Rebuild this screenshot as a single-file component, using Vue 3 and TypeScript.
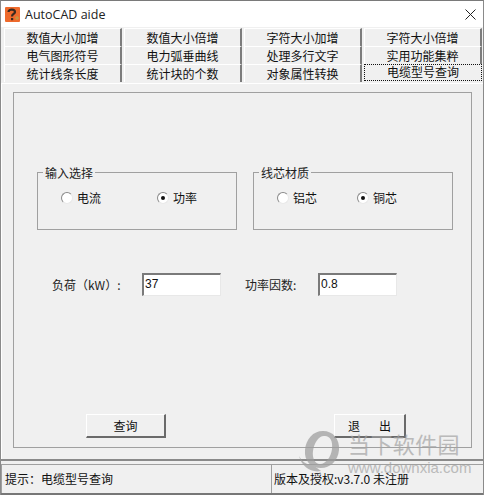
<script setup lang="ts">
import { ref } from 'vue'

const tabs = [
  '数值大小加增', '数值大小倍增', '字符大小加增', '字符大小倍增',
  '电气图形符号', '电力弧垂曲线', '处理多行文字', '实用功能集粹',
  '统计线条长度', '统计块的个数', '对象属性转换', '电缆型号查询'
]
const activeTab = ref('电缆型号查询')
const inputMode = ref('power')
const material = ref('copper')
const load = ref('37')
const factor = ref('0.8')
</script>

<template>
  <div class="window">
    <div class="titlebar">
      <svg class="app-icon" width="15" height="15" viewBox="0 0 15 15">
        <rect x="0" y="0" width="15" height="15" rx="1" fill="#ee6a2c" />
        <path d="M3.5 5 C3.5 1.8 10 1.8 10 5 C10 7 7 7 7 9.5" fill="none" stroke="#3a2a20" stroke-width="2.2" />
        <rect x="6" y="11" width="2.2" height="2.2" fill="#3a2a20" />
        <path d="M10 11 L14 11 M12 9 L12 13" stroke="#b9a24a" stroke-width="1" />
      </svg>
      <span class="title">AutoCAD aide</span>
      <svg class="close" width="11" height="11" viewBox="0 0 11 11">
        <path d="M0.5 0.5 L10.5 10.5 M10.5 0.5 L0.5 10.5" stroke="#222" stroke-width="1" fill="none" />
      </svg>
    </div>

    <div class="tabs">
      <div
        v-for="tab in tabs"
        :key="tab"
        class="tab"
        :class="{ active: tab === activeTab }"
        @click="activeTab = tab"
      >
        {{ tab }}
      </div>
    </div>

    <div class="page">
      <div class="panel">
        <div class="groups">
          <fieldset class="group">
            <legend>输入选择</legend>
            <div class="radios">
              <label class="radio" :class="{ on: inputMode === 'current' }" @click="inputMode = 'current'">
                <i></i>电流
              </label>
              <label class="radio" :class="{ on: inputMode === 'power' }" @click="inputMode = 'power'">
                <i></i>功率
              </label>
            </div>
          </fieldset>
          <fieldset class="group">
            <legend>线芯材质</legend>
            <div class="radios second">
              <label class="radio" :class="{ on: material === 'al' }" @click="material = 'al'">
                <i></i>铝芯
              </label>
              <label class="radio" :class="{ on: material === 'copper' }" @click="material = 'copper'">
                <i></i>铜芯
              </label>
            </div>
          </fieldset>
        </div>

        <div class="fields">
          <span class="label load-label">负荷（kW）:</span>
          <input v-model="load" class="field" type="text" />
          <span class="label factor-label">功率因数:</span>
          <input v-model="factor" class="field" type="text" />
        </div>

        <div class="buttons">
          <button class="btn query">查询</button>
          <button class="btn quit">退&nbsp;&nbsp;&nbsp;&nbsp;&nbsp;&nbsp;&nbsp;出</button>
        </div>
      </div>
    </div>

    <div class="statusbar">
      <div class="pane hint">提示：电缆型号查询</div>
      <div class="pane version">版本及授权:v3.7.0 未注册</div>
    </div>

    <div class="watermark">
      <svg class="wm-logo" width="46" height="46" viewBox="0 0 46 46">
        <path
          fill-rule="evenodd"
          fill="#9c9c9c"
          d="M25 1 C35 1 42 9 41 20 C40 31 32 38 23 38 C13 38 6 31 7 20 C8 9 15 1 25 1 Z
             M27 6 C21 5 16 13 15 21 C14 28 17 34 22 34 C28 34 33 27 34 19 C35 11 32 6 27 6 Z"
        />
        <path d="M1 26 C4 32 9 35 15 35 L23 41 C13 43 4 37 1 26 Z" fill="#9c9c9c" />
      </svg>
      <div class="wm-text">
        <div class="wm-cn">当下软件园</div>
        <div class="wm-url">www.downxia.com</div>
      </div>
    </div>
  </div>
</template>

<style scoped>
.window {
  position: relative;
  width: 484px;
  height: 495px;
  box-sizing: border-box;
  display: flex;
  flex-direction: column;
  background: #f0f0f0;
  border-top: 1px solid #7a7a7a;
  border-left: 1px solid #8a8a8a;
  border-right: 1px solid #8a8a8a;
  overflow: hidden;
  font-family: "Noto Sans CJK SC", "Liberation Sans", sans-serif;
  font-size: 12px;
  color: #111;
}

.titlebar {
  height: 26px;
  flex: none;
  display: flex;
  align-items: center;
  background: #fff;
  padding: 0 7px 0 4px;
}

.app-icon {
  flex: none;
}

.title {
  margin-left: 5px;
  font-family: "Open Sans", "Liberation Sans", sans-serif;
  font-size: 12.5px;
  color: #222;
}

.close {
  margin-left: auto;
}

.tabs {
  display: grid;
  grid-template-columns: repeat(4, 118px);
  grid-auto-rows: 18px;
  column-gap: 2px;
  padding: 1px 0 0 3px;
  flex: none;
  height: 56px;
  box-sizing: border-box;
}

.tab {
  box-sizing: border-box;
  text-align: center;
  line-height: 17px;
  background: #f0f0f0;
  border-top: 1px solid #fff;
  border-left: 1px solid #fff;
  border-right: 2px solid #7c7c7c;
}

.tab.active {
  border: 1px dotted #111;
  line-height: 14px;
  height: 17px;
}

.page {
  flex: 1;
  padding: 8px 11px 11px 11px;
  border-top: 1px solid #fff;
  border-left: 1px solid #fff;
  min-height: 0;
}

.panel {
  box-sizing: border-box;
  height: 100%;
  border: 1px solid #a0a0a0;
  padding: 72px 18px 9px 23px;
  display: flex;
  flex-direction: column;
}

.groups {
  display: flex;
  gap: 16px;
}

.group {
  box-sizing: border-box;
  width: 200px;
  min-width: 0;
  height: 65px;
  margin: 0;
  padding: 0;
  border: 1px solid #a0a0a0;
}

.group legend {
  margin-left: 5px;
  padding: 0 2px;
  line-height: 15px;
  color: #222;
}

.radios {
  display: flex;
  padding: 9px 0 0 23px;
}

.radio {
  display: flex;
  align-items: center;
  gap: 4px;
  line-height: 18px;
  white-space: nowrap;
}

.radio:first-child {
  width: 96px;
}

.radios.second .radio:first-child {
  width: 80px;
}

.radio i {
  box-sizing: border-box;
  width: 12px;
  height: 12px;
  border-radius: 50%;
  background: #fff;
  border: 1px solid;
  border-color: #8a8a8a #e8e8e8 #e8e8e8 #8a8a8a;
  display: flex;
  align-items: center;
  justify-content: center;
}

.radio.on i::after {
  content: "";
  width: 4px;
  height: 4px;
  border-radius: 50%;
  background: #111;
}

.fields {
  display: flex;
  align-items: center;
  margin-top: 43px;
  height: 23px;
}

.label {
  flex: none;
  box-sizing: border-box;
  white-space: nowrap;
  color: #222;
}

.load-label {
  width: 105px;
  padding-left: 15px;
}

.factor-label {
  width: 97px;
  padding-left: 24px;
}

.field {
  box-sizing: border-box;
  flex: none;
  width: 79px;
  height: 23px;
  padding: 0 0 3px 1px;
  background: #fff;
  border: 1px solid;
  border-color: #7a7a7a #e8e8e8 #e8e8e8 #7a7a7a;
  border-top-width: 2px;
  border-left-width: 2px;
  font-family: "Liberation Sans", sans-serif;
  font-size: 12px;
  color: #111;
  outline: none;
}

.buttons {
  display: flex;
  margin-top: auto;
}

.btn {
  box-sizing: border-box;
  height: 24px;
  padding: 0;
  background: #f0f0f0;
  border: 1px solid;
  border-color: #fff #6a6a6a #6a6a6a #fff;
  border-right-width: 2px;
  border-bottom-width: 2px;
  font: inherit;
  color: #111;
}

.query {
  width: 80px;
  margin-left: 49px;
}

.quit {
  width: 72px;
  margin-left: 168px;
}

.statusbar {
  flex: none;
  height: 36px;
  box-sizing: border-box;
  display: flex;
  border-top: 2px solid #8a8a8a;
  border-bottom: 2px solid #777;
  padding-top: 3px;
}

.pane {
  box-sizing: border-box;
  line-height: 28px;
  padding-left: 3px;
  border-top: 1px solid #a0a0a0;
  border-left: 1px solid #a0a0a0;
}

.hint {
  width: 270px;
}

.version {
  flex: 1;
  padding-left: 2px;
}

.watermark {
  position: absolute;
  left: 297px;
  top: 429px;
  display: flex;
  gap: 4px;
  opacity: 0.7;
  pointer-events: none;
}

.wm-text {
  color: #a4a4a4;
  font-family: "Liberation Sans", sans-serif;
}

.wm-cn {
  font-family: "Noto Sans CJK SC", sans-serif;
  font-size: 22px;
  line-height: 26px;
  letter-spacing: 0.4px;
}

.wm-url {
  margin-top: 4px;
  font-size: 15px;
  line-height: 16px;
}
</style>
